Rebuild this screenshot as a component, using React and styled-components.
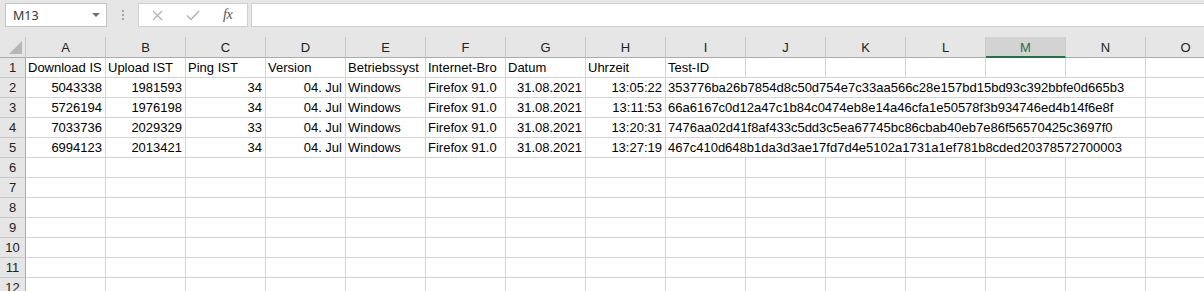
import React from "react";
import styled, { createGlobalStyle } from "styled-components";

const GlobalStyle = createGlobalStyle`
  body {
    margin: 0;
    background: #ffffff;
    overflow: hidden;
  }
`;

const Window = styled.div`
  width: 1204px;
  height: 291px;
  overflow: hidden;
  background: #ffffff;
  font-family: "Liberation Sans", Arial, sans-serif;
`;

const FormulaBar = styled.div`
  display: flex;
  align-items: flex-start;
  height: 37px;
  box-sizing: border-box;
  padding: 3px 0 0 5px;
  background: #e6e6e6;
`;

const NameBox = styled.div`
  display: flex;
  align-items: center;
  justify-content: space-between;
  width: 102px;
  height: 24px;
  box-sizing: border-box;
  padding: 0 6px 0 7px;
  background: #ffffff;
  border: 1px solid #c6c6c6;
  font-family: "Noto Sans", "Open Sans", sans-serif;
  font-size: 12.5px;
  color: #333333;
`;

const Caret = styled.span`
  width: 0;
  height: 0;
  border-left: 4px solid transparent;
  border-right: 4px solid transparent;
  border-top: 4px solid #6f6f6f;
`;

const Grip = styled.div`
  display: flex;
  flex-direction: column;
  justify-content: center;
  gap: 2px;
  width: 31px;
  height: 24px;
  align-items: center;
`;

const Dot = styled.span`
  width: 2px;
  height: 2px;
  background: #a6a6a6;
`;

const FxBox = styled.div`
  display: flex;
  align-items: center;
  width: 110px;
  height: 24px;
  box-sizing: border-box;
  padding-left: 13px;
  background: #ffffff;
  border: 1px solid #d0d0d0;
  gap: 23px;
`;

const FxLabel = styled.span`
  font-family: "Liberation Serif", "Times New Roman", serif;
  font-style: italic;
  font-size: 14px;
  color: #555555;
  letter-spacing: -0.5px;
`;

const FormulaInput = styled.div`
  flex: 1;
  height: 24px;
  margin-left: 3px;
  box-sizing: border-box;
  background: #ffffff;
  border: 1px solid #d0d0d0;
  border-right: none;
`;

const Sheet = styled.div`
  display: grid;
  grid-template-columns: 26px repeat(15, 80px);
  grid-template-rows: 21px;
  grid-auto-rows: 20px;
  font-size: 13px;
  color: #000000;
`;

const Corner = styled.div`
  background: #e6e6e6;
  border-right: 1px solid #c8c8c8;
  border-bottom: 1px solid #ababab;
  box-sizing: border-box;
  display: flex;
  align-items: flex-end;
  justify-content: flex-end;
  padding: 0 3px 3px 0;
`;

const CornerTriangle = styled.span`
  width: 0;
  height: 0;
  border-left: 13px solid transparent;
  border-bottom: 13px solid #b7b7b7;
`;

const ColHead = styled.div`
  display: flex;
  align-items: center;
  justify-content: center;
  box-sizing: border-box;
  background: ${(p) => (p.$active ? "#d3d3d3" : "#e6e6e6")};
  color: ${(p) => (p.$active ? "#217346" : "#222222")};
  border-right: 1px solid #c8c8c8;
  border-bottom: ${(p) => (p.$active ? "2px solid #217346" : "1px solid #ababab")};
  padding-top: ${(p) => (p.$active ? "1px" : "0")};
`;

const RowHead = styled.div`
  display: flex;
  align-items: center;
  justify-content: center;
  box-sizing: border-box;
  background: #e6e6e6;
  color: #222222;
  border-right: 1px solid #ababab;
  border-bottom: 1px solid #c8c8c8;
`;

const Cell = styled.div`
  box-sizing: border-box;
  grid-column: span ${(p) => p.$span || 1};
  border-right: 1px solid #d4d4d4;
  border-bottom: 1px solid #d4d4d4;
  padding: 0 3px 0 2px;
  line-height: 20px;
  white-space: nowrap;
  overflow: hidden;
  text-align: ${(p) => (p.$right ? "right" : "left")};
`;

const cols = "ABCDEFGHIJKLMNO".split("");

// header texts as far as they show before the next filled cell cuts them
const header = [
  "Download IS",
  "Upload IST",
  "Ping IST",
  "Version",
  "Betriebssyst",
  "Internet-Bro",
  "Datum",
  "Uhrzeit",
  "Test-ID",
];

const rows = [
  ["5043338", "1981593", "34", "04. Jul", "Windows", "Firefox 91.0", "31.08.2021", "13:05:22", "353776ba26b7854d8c50d754e7c33aa566c28e157bd15bd93c392bbfe0d665b3"],
  ["5726194", "1976198", "34", "04. Jul", "Windows", "Firefox 91.0", "31.08.2021", "13:11:53", "66a6167c0d12a47c1b84c0474eb8e14a46cfa1e50578f3b934746ed4b14f6e8f"],
  ["7033736", "2029329", "33", "04. Jul", "Windows", "Firefox 91.0", "31.08.2021", "13:20:31", "7476aa02d41f8af433c5dd3c5ea67745bc86cbab40eb7e86f56570425c3697f0"],
  ["6994123", "2013421", "34", "04. Jul", "Windows", "Firefox 91.0", "31.08.2021", "13:27:19", "467c410d648b1da3d3ae17fd7d4e5102a1731a1ef781b8cded20378572700003"],
];

// which data columns sit on the right side of the cell
const rightAligned = [true, true, true, true, false, false, true, true, false];

const XIcon = () => (
  <svg width="11" height="11" viewBox="0 0 11 11">
    <path d="M1 1 L10 10 M10 1 L1 10" stroke="#b3b3b3" strokeWidth="1.3" fill="none" />
  </svg>
);

const CheckIcon = () => (
  <svg width="14" height="11" viewBox="0 0 14 11">
    <path d="M1 5.5 L5 9.5 L13 1" stroke="#b3b3b3" strokeWidth="1.5" fill="none" />
  </svg>
);

const App = () => {
  const emptyRows = [6, 7, 8, 9, 10, 11, 12];

  return (
    <Window>
      <GlobalStyle />
      <FormulaBar>
        <NameBox>
          <span>M13</span>
          <Caret />
        </NameBox>
        <Grip>
          <Dot />
          <Dot />
          <Dot />
        </Grip>
        <FxBox>
          <XIcon />
          <CheckIcon />
          <FxLabel>fx</FxLabel>
        </FxBox>
        <FormulaInput />
      </FormulaBar>

      <Sheet>
        <Corner>
          <CornerTriangle />
        </Corner>
        {cols.map((c) => (
          <ColHead key={c} $active={c === "M"}>
            {c}
          </ColHead>
        ))}

        <RowHead>1</RowHead>
        {cols.map((c, i) => (
          <Cell key={c}>{header[i] || ""}</Cell>
        ))}

        {rows.map((r, ri) => (
          <React.Fragment key={ri}>
            <RowHead>{ri + 2}</RowHead>
            {r.map((v, i) => (
              <Cell key={i} $right={rightAligned[i]} $span={i === 8 ? 6 : 1}>
                {v}
              </Cell>
            ))}
            <Cell />
          </React.Fragment>
        ))}

        {emptyRows.map((n) => (
          <React.Fragment key={n}>
            <RowHead>{n}</RowHead>
            {cols.map((c) => (
              <Cell key={c} />
            ))}
          </React.Fragment>
        ))}
      </Sheet>
    </Window>
  );
};

export default App;
